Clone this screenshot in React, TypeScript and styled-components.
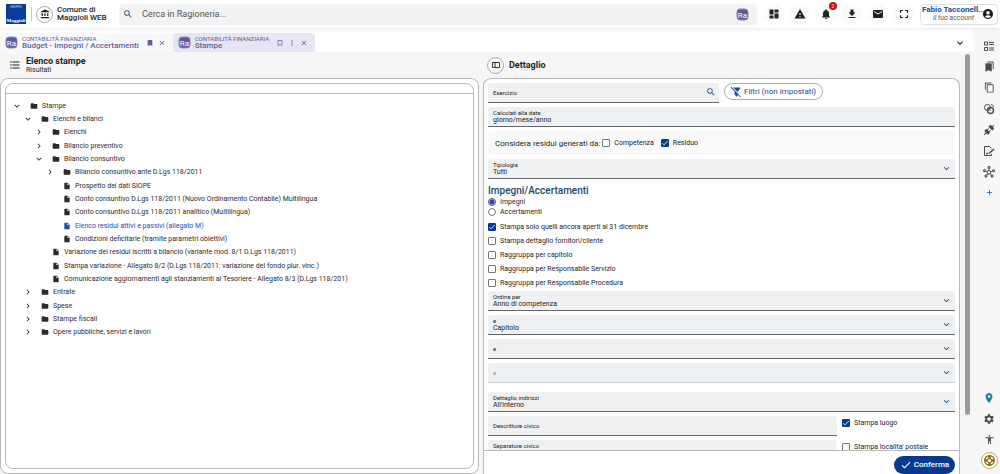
import React, { useState } from 'react';
import styled, { createGlobalStyle, css } from 'styled-components';
import {
  MdAccessibility,
  MdAccountBalance,
  MdAccountCircle,
  MdAdd,
  MdBookmark,
  MdBookmarkBorder,
  MdBookmarks,
  MdCheck,
  MdChevronRight,
  MdClose,
  MdContentCopy,
  MdDashboard,
  MdDownload,
  MdEmail,
  MdExpandMore,
  MdFolder,
  MdFormatListBulleted,
  MdFullscreen,
  MdInsertDriveFile,
  MdMoreVert,
  MdNotifications,
  MdOutlineHub,
  MdPlace,
  MdSearch,
  MdSettings,
  MdSupport,
  MdWarning,
} from 'react-icons/md';

const BLUE = '#063a91';

const GlobalStyle = createGlobalStyle`
  * { box-sizing: border-box; }
  body {
    margin: 0;
    background: #fff;
    color: #1d1d1f;
    font-family: Roboto, "Liberation Sans", sans-serif;
    font-size: 8px;
  }
  button, input, select { font: inherit; color: inherit; }
  button { cursor: pointer; border: 0; padding: 0; background: none; }
  svg { display: block; flex: none; }
`;

const Page = styled.div`
  display: flex;
  flex-direction: column;
  height: 100vh;
  overflow: hidden;
`;

const Header = styled.header`
  display: flex;
  align-items: center;
  flex: none;
  height: 28px;
  padding: 0 2px 0 6px;
  background: #fff;
  box-shadow: 0 1px 4px #e9e9ec;
  z-index: 1;
`;

const Entity = styled.div`
  display: flex;
  align-items: center;
  gap: 4px;
  margin-left: 5px;
  padding-left: 4px;
  border-left: 1px solid #c9c9cc;
  width: 88px;
  height: 14px;
  font-size: 8px;
  line-height: 8px;
  font-weight: 500;
  white-space: nowrap;
`;

const Ring = styled.span`
  display: grid;
  place-items: center;
  flex: none;
  width: 17px;
  height: 17px;
  border: 1px solid #aaa;
  border-radius: 50%;
`;

const SearchBox = styled.label`
  display: flex;
  align-items: center;
  flex: 1;
  min-width: 0;
  gap: 9px;
  height: 21px;
  padding: 0 8px 0 4px;
  border-radius: 4px;
  background: #f2f3f5;
  color: #444;
`;

const SearchInput = styled.input`
  flex: 1;
  min-width: 0;
  padding: 0;
  border: 0;
  outline: 0;
  background: none;
  font-size: 9px;
  &::placeholder { color: #555; opacity: 1; }
`;

const Actions = styled.div`
  display: flex;
  gap: 5px;
  margin: 0 6px;
`;

const RoundButton = styled.button`
  position: relative;
  display: grid;
  place-items: center;
  width: 21px;
  height: 21px;
  border-radius: 50%;
  background: #fafafa;
  color: #222;
`;

const Badge = styled.span`
  position: absolute;
  top: -2px;
  right: -1px;
  width: 8px;
  height: 8px;
  border-radius: 50%;
  background: #c4141b;
  color: #fff;
  font-size: 5px;
  line-height: 8px;
  text-align: center;
`;

const Account = styled.button`
  display: flex;
  align-items: center;
  width: 78px;
  height: 21px;
  padding: 0 3px 0 1px;
  border: 1px solid #e2e2e6;
  border-radius: 4px;
  line-height: 8px;
  text-align: right;
`;

const AccountText = styled.span`
  flex: 1;
  min-width: 0;
  padding-right: 8px;
  font-size: 7px;
  font-style: italic;
  color: #555;
  white-space: nowrap;
  strong {
    display: block;
    font-size: 8px;
    font-style: normal;
    color: #164ba0;
  }
`;

const Body = styled.div`
  display: flex;
  flex: 1;
  min-height: 0;
`;

const Work = styled.div`
  display: flex;
  flex-direction: column;
  flex: 1;
  min-width: 0;
`;

const Tabs = styled.nav`
  display: flex;
  flex: none;
  height: 24px;
  padding-top: 5px;
`;

const Tab = styled.div<{ $active?: boolean }>`
  display: flex;
  align-items: center;
  gap: 4px;
  padding: 0 7px 0 5px;
  border-radius: 4px 4px 0 0;
  background: ${p => (p.$active ? '#e6e4f5' : '#f8f8fa')};
  color: #625f96;
`;

const TabName = styled.button`
  text-align: left;
  font-size: 8px;
  line-height: 8px;
  font-weight: 500;
  white-space: nowrap;
  small {
    display: block;
    font-size: 6px;
    line-height: 6px;
    font-weight: 400;
  }
`;

const TabTools = styled.span`
  display: flex;
  gap: 4px;
  margin-left: 3px;
`;

const TabsMore = styled.button`
  margin-left: auto;
  margin-right: 8px;
`;

const Panels = styled.main`
  display: flex;
  flex: 1;
  min-height: 0;
  background: #f6f6f6;
`;

const Column = styled.section<{ $grow: number }>`
  display: flex;
  flex-direction: column;
  flex: ${p => p.$grow} 1 0;
  min-width: 0;
`;

const ColumnHead = styled.div<{ $indent: number }>`
  display: flex;
  align-items: center;
  flex: none;
  gap: 5px;
  height: 26px;
  padding-left: ${p => p.$indent}px;
`;

const Title = styled.h2`
  margin: 0;
  font-size: 9px;
  line-height: 10px;
  font-weight: 700;
  small {
    display: block;
    font-size: 7px;
    line-height: 8px;
    font-weight: 400;
  }
`;

const Panel = styled.div<{ $inset?: boolean }>`
  display: flex;
  flex-direction: column;
  flex: 1;
  min-height: 0;
  border: 1px solid #b9b9b9;
  border-radius: 8px;
  background: #fff;
  ${p => (p.$inset ? css`padding: 4px;` : css`border-bottom: 0; border-radius: 8px 8px 0 0;`)}
`;

const PanelGap = styled.div`
  flex: none;
  width: 4px;
`;

const TreeCard = styled.div`
  flex: 1;
  min-height: 0;
  overflow: hidden;
  border: 1px solid #b9b9b9;
  border-radius: 8px;
`;

const TreeBar = styled.div`
  height: 10px;
  border-bottom: 1px solid #b9b9b9;
`;

const Tree = styled.ul`
  display: grid;
  grid-auto-rows: 1fr;
  height: 240px;
  margin: 5px 0 0;
  padding: 0 0 0 6px;
  list-style: none;
`;

const TreeRow = styled.li<{ $level: number; $selected?: boolean }>`
  display: flex;
  align-items: center;
  padding-left: ${p => p.$level * 11}px;
  color: ${p => (p.$selected ? '#1d4eb0' : '#2b2b2e')};
  white-space: nowrap;
`;

const Toggle = styled.button`
  width: 10px;
  height: 10px;
  margin-right: 8px;
`;

const NoToggle = styled.span`
  width: 18px;
`;

const NodeLabel = styled.button`
  display: flex;
  align-items: center;
  gap: 4px;
  font-size: 7px;
  line-height: 10px;
`;

const Form = styled.form`
  display: flex;
  flex-direction: column;
  flex: 1;
  min-height: 0;
`;

const Scroller = styled.div`
  display: flex;
  flex-direction: column;
  flex: 1;
  min-height: 0;
  gap: 4px;
  padding: 4px 4px 0;
  overflow-y: auto;
  scrollbar-width: none;
  > * { flex: none; }
`;

const FieldRow = styled.div<{ $cols: string }>`
  display: grid;
  grid-template-columns: ${p => p.$cols};
  gap: 5px;
`;

const FieldBox = styled.label<{ $disabled?: boolean }>`
  position: relative;
  display: flex;
  flex-direction: column;
  justify-content: center;
  height: 20px;
  padding: 0 5px;
  border-bottom: 1px solid ${p => (p.$disabled ? '#c5ced8' : '#66696c')};
  border-radius: 3px 3px 0 0;
  background: #eff0f2;
  color: ${p => (p.$disabled ? '#8d939a' : '#222')};
`;

const FieldLabel = styled.span`
  font-size: 6px;
  line-height: 7px;
`;

const controlCss = css`
  appearance: none;
  width: 100%;
  height: 8px;
  padding: 0;
  border: 0;
  outline: 0;
  background: none;
  font-size: 7px;
  line-height: 8px;
`;

const overlayCss = css`
  position: absolute;
  inset: 0;
  height: 100%;
  padding: 0 5px;
`;

const TextInput = styled.input<{ $empty?: boolean }>`
  ${controlCss}
  ${p => p.$empty && overlayCss}
`;

const Select = styled.select<{ $empty?: boolean }>`
  ${controlCss}
  ${p => p.$empty && overlayCss}
`;

const FieldIcon = styled.span`
  position: absolute;
  right: 3px;
  top: 4px;
  color: #1c4a86;
  pointer-events: none;
`;

const FilterButton = styled.button`
  display: flex;
  align-items: center;
  justify-self: start;
  gap: 2px;
  height: 17px;
  padding: 0 6px 0 5px;
  border: 1px solid #a9adb5;
  border-radius: 9px;
  color: #204a91;
  font-size: 8px;
  white-space: nowrap;
`;

const Residui = styled.div`
  display: flex;
  align-items: center;
  gap: 7px;
  height: 24px;
  padding: 0 7px;
  border-radius: 4px;
  background: #f9f9f9;
`;

const ResiduiText = styled.span`
  font-size: 8px;
  margin-right: -5px;
`;

const Group = styled.fieldset`
  margin: 2px 0 -3px;
  padding: 0;
  border: 0;
`;

const Legend = styled.legend`
  padding: 0;
  font-size: 10px;
  line-height: 12px;
  font-weight: 500;
  color: #1b4569;
`;

const Option = styled.label<{ $tall?: boolean }>`
  display: flex;
  align-items: center;
  gap: 4px;
  height: ${p => (p.$tall ? 14 : 10)}px;
  font-size: 7px;
  white-space: nowrap;
`;

const Radio = styled.input`
  appearance: none;
  width: 8px;
  height: 8px;
  margin: 0;
  border: 1px solid #777;
  border-radius: 50%;
  &:checked {
    border-color: #4a4c9c;
    background: radial-gradient(circle, #3f4196 0 2px, #dfe0f5 3px);
  }
`;

const CheckWrap = styled.span`
  position: relative;
  width: 8px;
  height: 8px;
  color: #fff;
  svg { position: absolute; inset: 0; pointer-events: none; }
`;

const CheckInput = styled.input`
  appearance: none;
  display: block;
  width: 8px;
  height: 8px;
  margin: 0;
  border: 1px solid #777;
  border-radius: 1px;
  background: #fff;
  &:checked {
    border-color: ${BLUE};
    background: ${BLUE};
  }
`;

const Checks = styled.div`
  padding-top: 3px;
`;

const Address = styled.div`
  display: flex;
  flex-direction: column;
  gap: 4px;
  margin-top: 5px;
`;

const Footer = styled.div`
  display: flex;
  align-items: center;
  justify-content: flex-end;
  flex: none;
  height: 24px;
  padding: 4px 4px 0;
  border-top: 1px solid #b9b9b9;
`;

const Confirm = styled.button`
  display: flex;
  align-items: center;
  justify-content: center;
  gap: 2px;
  width: 61px;
  height: 18px;
  border-radius: 9px;
  background: ${BLUE};
  color: #fff;
  font-size: 8px;
  font-weight: 500;
`;

const ScrollTrack = styled.div`
  flex: none;
  width: 14px;
  padding: 2px 4px 0 5px;
`;

const ScrollThumb = styled.div`
  height: 86%;
  border-radius: 3px;
  background: #9b9b9b;
`;

const Rail = styled.aside`
  display: flex;
  flex-direction: column;
  justify-content: space-between;
  flex: none;
  width: 26px;
  padding: 7px 0 3px 4px;
  background: #f7f7f8;
`;

const RailGroup = styled.div`
  display: flex;
  flex-direction: column;
  align-items: center;
`;

const RailButton = styled.button<{ $tone?: string; $ring?: boolean }>`
  display: grid;
  place-items: center;
  width: 21px;
  height: 21px;
  color: ${p => p.$tone ?? '#4a4a4a'};
  ${p => p.$ring && css`
    width: 17px;
    height: 17px;
    margin: 2px;
    border: 1px solid #b5a56b;
    border-radius: 50%;
    background: #fff;
  `}
`;

const Logo = () => (
  <svg width="20" height="20" viewBox="0 0 20 20" role="img" aria-label="Gruppo Maggioli">
    <rect width="20" height="20" fill="#073c98" />
    <text x="10" y="4" fontSize="3" textAnchor="middle" fill="#cfdcf2">GRUPPO</text>
    <text x="10" y="18" fontSize="5" fontWeight="700" fontFamily="Liberation Serif, serif" textAnchor="middle" fill="#fff">Maggioli</text>
  </svg>
);

const RaIcon = () => (
  <svg width="13" height="13" viewBox="0 0 13 13" aria-hidden="true">
    <rect x="1" y="1" width="11" height="11" rx="3" fill="#5f5b98" stroke="#8c89b8" />
    <text x="6.5" y="9.5" fontSize="8" textAnchor="middle" fill="#fff">Ra</text>
  </svg>
);

const PanelIcon = () => (
  <svg width="8" height="8" viewBox="0 0 8 8" fill="none" stroke="#333">
    <path d="M.5 1.5h7v5h-7zM3 1.5v5" />
  </svg>
);

const FilterOffIcon = () => (
  <svg width="12" height="12" viewBox="0 0 24 24" fill="currentColor">
    <path d="M2.400 1.700 1.100 3 9 10.900V17l4 4c.4.400 1 .4 1.400 0 .4-.4.600-.7.600-1.100v-3l5.700 5.700 1.300-1.300zM15 12l5.600-7.400c.3-.4.300-1.100-.2-1.400-.2-.1-.4-.2-.6-.2H6.200l8.800 8.800z" />
  </svg>
);

const BallotIcon = () => (
  <svg width="12" height="12" viewBox="0 0 12 12" fill="none" stroke="currentColor">
    <path d="M1.500 2h3v3h-3zM1.500 7.500h3v3h-3zM6 2.500h5M6 4.500h5M6 8h5M6 10h5" />
  </svg>
);

const RingsIcon = () => (
  <svg width="12" height="12" viewBox="0 0 12 12" fill="none" stroke="currentColor">
    <circle cx="4.500" cy="4.500" r="3" />
    <circle cx="7.500" cy="7.500" r="3" strokeWidth="1.400" />
    <path d="M5 4.500 7.500 7.500M8 1.500c1.500.2 2.500 1.200 2.700 2.700" />
  </svg>
);

const PlugIcon = () => (
  <svg width="12" height="12" viewBox="0 0 24 24" fill="currentColor">
    <path d="M21.400 7.500c.8.800.8 2.100 0 2.800l-2.800 2.800-7.800-7.800 2.800-2.800c.8-.8 2.100-.8 2.800 0l1.800 1.800 3-3 1.400 1.400-3 3 1.800 1.800m-5.800 5.800-1.400-1.400-2.800 2.800-2.100-2.100 2.800-2.800-1.400-1.400-2.800 2.800-1.500-1.400-2.800 2.800c-.8.800-.8 2.100 0 2.800l1.800 1.800-4 4 1.400 1.400 4-4 1.800 1.800c.8.800 2.100.8 2.800 0l2.800-2.800-1.400-1.400 2.800-2.900Z" />
  </svg>
);

const DocEditIcon = () => (
  <svg width="12" height="12" viewBox="0 0 12 12" fill="none" stroke="currentColor">
    <path d="M8.500 3.500 6.500 1.500h-5v9h7V9" />
    <path d="M6 8.500 11 4M3 8.500h2" strokeWidth="1.600" />
  </svg>
);

type CheckProps = { label: string; checked?: boolean; tall?: boolean };

const Check = ({ label, checked, tall }: CheckProps) => (
  <Option $tall={tall}>
    <CheckWrap>
      <CheckInput type="checkbox" defaultChecked={checked} />
      <MdCheck size={8} />
    </CheckWrap>
    {label}
  </Option>
);

type FieldProps = {
  label: string;
  value?: string;
  kind?: 'text' | 'select' | 'search';
  disabled?: boolean;
};

const Field = ({ label, value, kind = 'text', disabled }: FieldProps) => (
  <FieldBox $disabled={disabled}>
    <FieldLabel>{label}</FieldLabel>
    {kind === 'select' ? (
      <Select $empty={!value} defaultValue={value ?? ''} disabled={disabled}>
        <option value={value ?? ''}>{value ?? ''}</option>
      </Select>
    ) : (
      <TextInput type="text" $empty={!value} defaultValue={value} />
    )}
    {kind === 'select' && <FieldIcon><MdExpandMore size={11} /></FieldIcon>}
    {kind === 'search' && <FieldIcon><MdSearch size={10} /></FieldIcon>}
  </FieldBox>
);

type Node = { level: number; label: string; kind: 'open' | 'closed' | 'file' };

const nodes: Node[] = [
  { level: 0, label: 'Stampe', kind: 'open' },
  { level: 1, label: 'Elenchi e bilanci', kind: 'open' },
  { level: 2, label: 'Elenchi', kind: 'closed' },
  { level: 2, label: 'Bilancio preventivo', kind: 'closed' },
  { level: 2, label: 'Bilancio consuntivo', kind: 'open' },
  { level: 3, label: 'Bilancio consuntivo ante D.Lgs 118/2011', kind: 'closed' },
  { level: 3, label: 'Prospetto dei dati SIOPE', kind: 'file' },
  { level: 3, label: 'Conto consuntivo D.Lgs 118/2011 (Nuovo Ordinamento Contabile) Multilingua', kind: 'file' },
  { level: 3, label: 'Conto consuntivo D.Lgs 118/2011 analitico (Multilingua)', kind: 'file' },
  { level: 3, label: 'Elenco residui attivi e passivi (allegato M)', kind: 'file' },
  { level: 3, label: 'Condizioni deficitarie (tramite parametri obiettivi)', kind: 'file' },
  { level: 2, label: 'Variazione dei residui iscritti a bilancio (variante mod. 8/1 D.Lgs 118/2011)', kind: 'file' },
  { level: 2, label: 'Stampa variazione - Allegato 8/2 (D.Lgs 118/2011: variazione del fondo plur. vinc.)', kind: 'file' },
  { level: 2, label: 'Comunicazione aggiornamenti agli stanziamenti al Tesoriere - Allegato 8/3 (D.Lgs 118/201)', kind: 'file' },
  { level: 1, label: 'Entrate', kind: 'closed' },
  { level: 1, label: 'Spese', kind: 'closed' },
  { level: 1, label: 'Stampe fiscali', kind: 'closed' },
  { level: 1, label: 'Opere pubbliche, servizi e lavori', kind: 'closed' },
];

export default function App() {
  const [selected, setSelected] = useState(9);
  return (
    <Page>
      <GlobalStyle />
      <Header>
        <Logo />
        <Entity>
          <Ring><MdAccountBalance size={10} /></Ring>
          <span>Comune di<br />Maggioli WEB</span>
        </Entity>
        <SearchBox>
          <MdSearch size={10} />
          <SearchInput type="search" aria-label="Cerca" placeholder="Cerca in Ragioneria..." />
          <RaIcon />
        </SearchBox>
        <Actions>
          <RoundButton aria-label="Cruscotto"><MdDashboard size={12} /></RoundButton>
          <RoundButton aria-label="Avvisi"><MdWarning size={12} /></RoundButton>
          <RoundButton aria-label="Notifiche"><MdNotifications size={12} /><Badge>2</Badge></RoundButton>
          <RoundButton aria-label="Scarica"><MdDownload size={12} /></RoundButton>
          <RoundButton aria-label="Posta"><MdEmail size={12} /></RoundButton>
          <RoundButton aria-label="Schermo intero"><MdFullscreen size={14} /></RoundButton>
        </Actions>
        <Account>
          <AccountText><strong>Fabio Tacconell...</strong>il tuo account</AccountText>
          <MdAccountCircle size={12} />
        </Account>
      </Header>
      <Body>
        <Work>
          <Tabs>
            <Tab>
              <RaIcon />
              <TabName><small>CONTABILITÀ FINANZIARIA</small>Budget - Impegni / Accertamenti</TabName>
              <TabTools>
                <button aria-label="Segnalibro"><MdBookmark size={8} /></button>
                <button aria-label="Chiudi"><MdClose size={8} /></button>
              </TabTools>
            </Tab>
            <Tab $active>
              <RaIcon />
              <TabName><small>CONTABILITÀ FINANZIARIA</small>Stampe</TabName>
              <TabTools>
                <button aria-label="Segnalibro"><MdBookmarkBorder size={8} /></button>
                <button aria-label="Altro"><MdMoreVert size={8} /></button>
                <button aria-label="Chiudi"><MdClose size={8} /></button>
              </TabTools>
            </Tab>
            <TabsMore aria-label="Altre schede"><MdExpandMore size={12} /></TabsMore>
          </Tabs>
          <Panels>
            <Column $grow={479}>
              <ColumnHead $indent={9}>
                <MdFormatListBulleted size={12} />
                <Title>Elenco stampe<small>Risultati</small></Title>
              </ColumnHead>
              <Panel $inset>
                <TreeCard>
                  <TreeBar />
                  <Tree>
                    {nodes.map((n, i) => (
                      <TreeRow key={n.label} $level={n.level} $selected={i === selected}>
                        {n.kind === 'file' ? <NoToggle /> : (
                          <Toggle type="button" aria-label={n.label}>
                            {n.kind === 'open' ? <MdExpandMore size={10} /> : <MdChevronRight size={10} />}
                          </Toggle>
                        )}
                        <NodeLabel type="button" onClick={() => setSelected(i)}>
                          {n.kind === 'file' ? <MdInsertDriveFile size={8} /> : <MdFolder size={8} />}
                          {n.label}
                        </NodeLabel>
                      </TreeRow>
                    ))}
                  </Tree>
                </TreeCard>
              </Panel>
            </Column>
            <PanelGap />
            <Column $grow={477}>
              <ColumnHead $indent={4}>
                <Ring as="button" aria-label="Riquadro"><PanelIcon /></Ring>
                <Title>Dettaglio</Title>
              </ColumnHead>
              <Panel>
                <Form onSubmit={e => e.preventDefault()}>
                  <Scroller>
                    <FieldRow $cols="231fr 231fr">
                      <Field label="Esercizio" kind="search" />
                      <FilterButton type="button"><FilterOffIcon />Filtri (non impostati)</FilterButton>
                    </FieldRow>
                    <Field label="Calcolati alla data" value="giorno/mese/anno" />
                    <Residui role="group">
                      <ResiduiText>Considera residui generati da:</ResiduiText>
                      <Check label="Competenza" />
                      <Check label="Residuo" checked />
                    </Residui>
                    <Field label="Tipologia" value="Tutti" kind="select" />
                    <Group>
                      <Legend>Impegni/Accertamenti</Legend>
                      <Option><Radio type="radio" name="tipo" defaultChecked />Impegni</Option>
                      <Option><Radio type="radio" name="tipo" />Accertamenti</Option>
                      <Checks>
                        <Check tall label="Stampa solo quelli ancora aperti al 31 dicembre" checked />
                        <Check tall label="Stampa dettaglio fornitori/cliente" />
                        <Check tall label="Raggruppa per capitolo" />
                        <Check tall label="Raggruppa per Responsabile Servizio" />
                        <Check tall label="Raggruppa per Responsabile Procedura" />
                      </Checks>
                    </Group>
                    <Field label="Ordina per" value="Anno di competenza" kind="select" />
                    <Field label="e" value="Capitolo" kind="select" />
                    <Field label="e" kind="select" />
                    <Field label="e" kind="select" disabled />
                    <Address>
                      <Field label="Dettaglio indirizzi" value="All'interno" kind="select" />
                      <FieldRow $cols="349fr 113fr">
                        <Field label="Descrittore civico" />
                        <Check tall label="Stampa luogo" checked />
                      </FieldRow>
                      <FieldRow $cols="349fr 113fr">
                        <Field label="Separatore civico" value=" " />
                        <Check tall label="Stampa localita' postale" />
                      </FieldRow>
                    </Address>
                  </Scroller>
                  <Footer>
                    <Confirm type="submit"><MdCheck size={12} />Conferma</Confirm>
                  </Footer>
                </Form>
              </Panel>
            </Column>
            <ScrollTrack aria-hidden="true"><ScrollThumb /></ScrollTrack>
          </Panels>
        </Work>
        <Rail>
          <RailGroup>
            <RailButton aria-label="Elenco"><BallotIcon /></RailButton>
            <RailButton aria-label="Segnalibri"><MdBookmarks size={11} /></RailButton>
            <RailButton aria-label="Copia"><MdContentCopy size={11} /></RailButton>
            <RailButton aria-label="Collegamenti"><RingsIcon /></RailButton>
            <RailButton aria-label="Connessioni"><PlugIcon /></RailButton>
            <RailButton aria-label="Modifica documento"><DocEditIcon /></RailButton>
            <RailButton aria-label="Rete"><MdOutlineHub size={12} /></RailButton>
            <RailButton aria-label="Aggiungi" $tone="#1a5f9e"><MdAdd size={9} /></RailButton>
          </RailGroup>
          <RailGroup>
            <RailButton aria-label="Posizione" $tone="#178a9e"><MdPlace size={12} /></RailButton>
            <RailButton aria-label="Impostazioni"><MdSettings size={12} /></RailButton>
            <RailButton aria-label="Accessibilità"><MdAccessibility size={11} /></RailButton>
            <RailButton aria-label="Assistenza" $tone="#8a6d00" $ring><MdSupport size={13} /></RailButton>
          </RailGroup>
        </Rail>
      </Body>
    </Page>
  );
}
